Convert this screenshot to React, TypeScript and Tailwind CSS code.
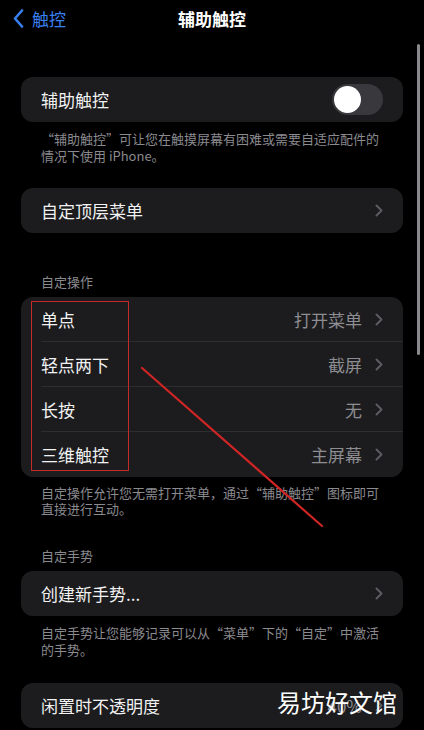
import React from "react";

const font = { fontFamily: '"Noto Sans CJK SC", "Noto Sans", sans-serif' };

function Chevron() {
  return (
    <svg width="8" height="13" viewBox="0 0 8 13" className="shrink-0">
      <polyline points="1.5,1.5 6.5,6.5 1.5,11.5" fill="none" stroke="#5c5c60" strokeWidth="2" strokeLinecap="round" strokeLinejoin="round" />
    </svg>
  );
}

function Row({ label, value, chevron = true, last = true }: { label: string; value?: string; chevron?: boolean; last?: boolean }) {
  return (
    <div className="relative flex h-[45px] items-center pl-[20px] pr-[20px]">
      <span className="flex-1 text-[17px] text-[#f2f2f2]">{label}</span>
      {value && <span className="mr-[13px] text-[17px] text-[#8d8d92]">{value}</span>}
      {chevron && <Chevron />}
      {!last && <div className="absolute bottom-0 left-[20px] right-0 h-px bg-[#2e2e31]" />}
    </div>
  );
}

export default function App() {
  return (
    <div className="relative h-[730px] w-[424px] overflow-hidden bg-black" style={font}>
      {/* nav */}
      <div className="relative flex h-[37px] items-center">
        <div className="ml-[13px] flex items-center gap-[8px]">
          <svg width="11" height="19" viewBox="0 0 11 19">
            <polyline points="9,1.5 2,9.5 9,17.5" fill="none" stroke="#3a7ff0" strokeWidth="2.6" strokeLinecap="round" strokeLinejoin="round" />
          </svg>
          <span className="text-[17px] text-[#3a7ff0]">触控</span>
        </div>
        <div className="absolute left-0 right-0 top-0 flex h-[37px] items-center justify-center text-[17px] font-bold text-white">辅助触控</div>
      </div>

      <div className="mt-[40px] flex flex-col">
        <div className="mx-[21px] rounded-[12px] bg-[#1c1c1e]">
          <div className="flex h-[45px] items-center pl-[20px] pr-[20px]">
            <span className="flex-1 text-[17px] text-[#f2f2f2]">辅助触控</span>
            <div className="flex h-[31px] w-[51px] items-center rounded-full bg-[#39393d] p-[2px]">
              <div className="h-[27px] w-[27px] rounded-full bg-white" />
            </div>
          </div>
        </div>
        <p className="mx-[41px] mt-[8px] text-[13px] leading-[17px] text-[#8a8a8f]">“辅助触控”可让您在触摸屏幕有困难或需要自适应配件的情况下使用 iPhone。</p>

        <div className="mx-[21px] mt-[24px] rounded-[12px] bg-[#1c1c1e]">
          <Row label="自定顶层菜单" />
        </div>

        <p className="mx-[41px] mt-[40px] text-[13px] leading-[17px] text-[#8a8a8f]">自定操作</p>
        <div className="mx-[21px] mt-[7px] rounded-[12px] bg-[#1c1c1e]">
          <Row label="单点" value="打开菜单" last={false} />
          <Row label="轻点两下" value="截屏" last={false} />
          <Row label="长按" value="无" last={false} />
          <Row label="三维触控" value="主屏幕" />
        </div>
        <p className="mx-[41px] mt-[8px] text-[13px] leading-[16px] text-[#8a8a8f]">自定操作允许您无需打开菜单，通过“辅助触控”图标即可直接进行互动。</p>

        <p className="mx-[41px] mt-[30px] text-[13px] leading-[17px] text-[#8a8a8f]">自定手势</p>
        <div className="mx-[21px] mt-[7px] rounded-[12px] bg-[#1c1c1e]">
          <Row label="创建新手势..." />
        </div>
        <div className="mx-[41px] mt-[8px] flex flex-col text-[13px] leading-[17px] text-[#8a8a8f]">
          <span>自定手势让您能够记录可以从“菜单”下的“自定”中激活</span>
          <span>的手势。</span>
        </div>

        <div className="mx-[21px] mt-[25px] rounded-[12px] bg-[#1c1c1e]">
          <Row label="闲置时不透明度" value="40%" />
        </div>
      </div>

      {/* scrollbar */}
      <div className="absolute left-[417px] top-[44px] h-[311px] w-[3px] rounded-full bg-[#8a8a8e]" />

      {/* red annotation box */}
      <div className="absolute left-[31px] top-[301px] h-[170px] w-[98px] border-[1.5px] border-[#c42a2a]" />

      {/* red arrow line */}
      <svg className="absolute left-0 top-0" width="424" height="730">
        <line x1="142" y1="368" x2="322" y2="526" stroke="#d02525" strokeWidth="2.2" strokeLinecap="round" />
      </svg>

      {/* watermark */}
      <div className="absolute left-[277px] top-[687px] text-[24px] leading-[30px] text-white">易坊好文馆</div>
    </div>
  );
}
